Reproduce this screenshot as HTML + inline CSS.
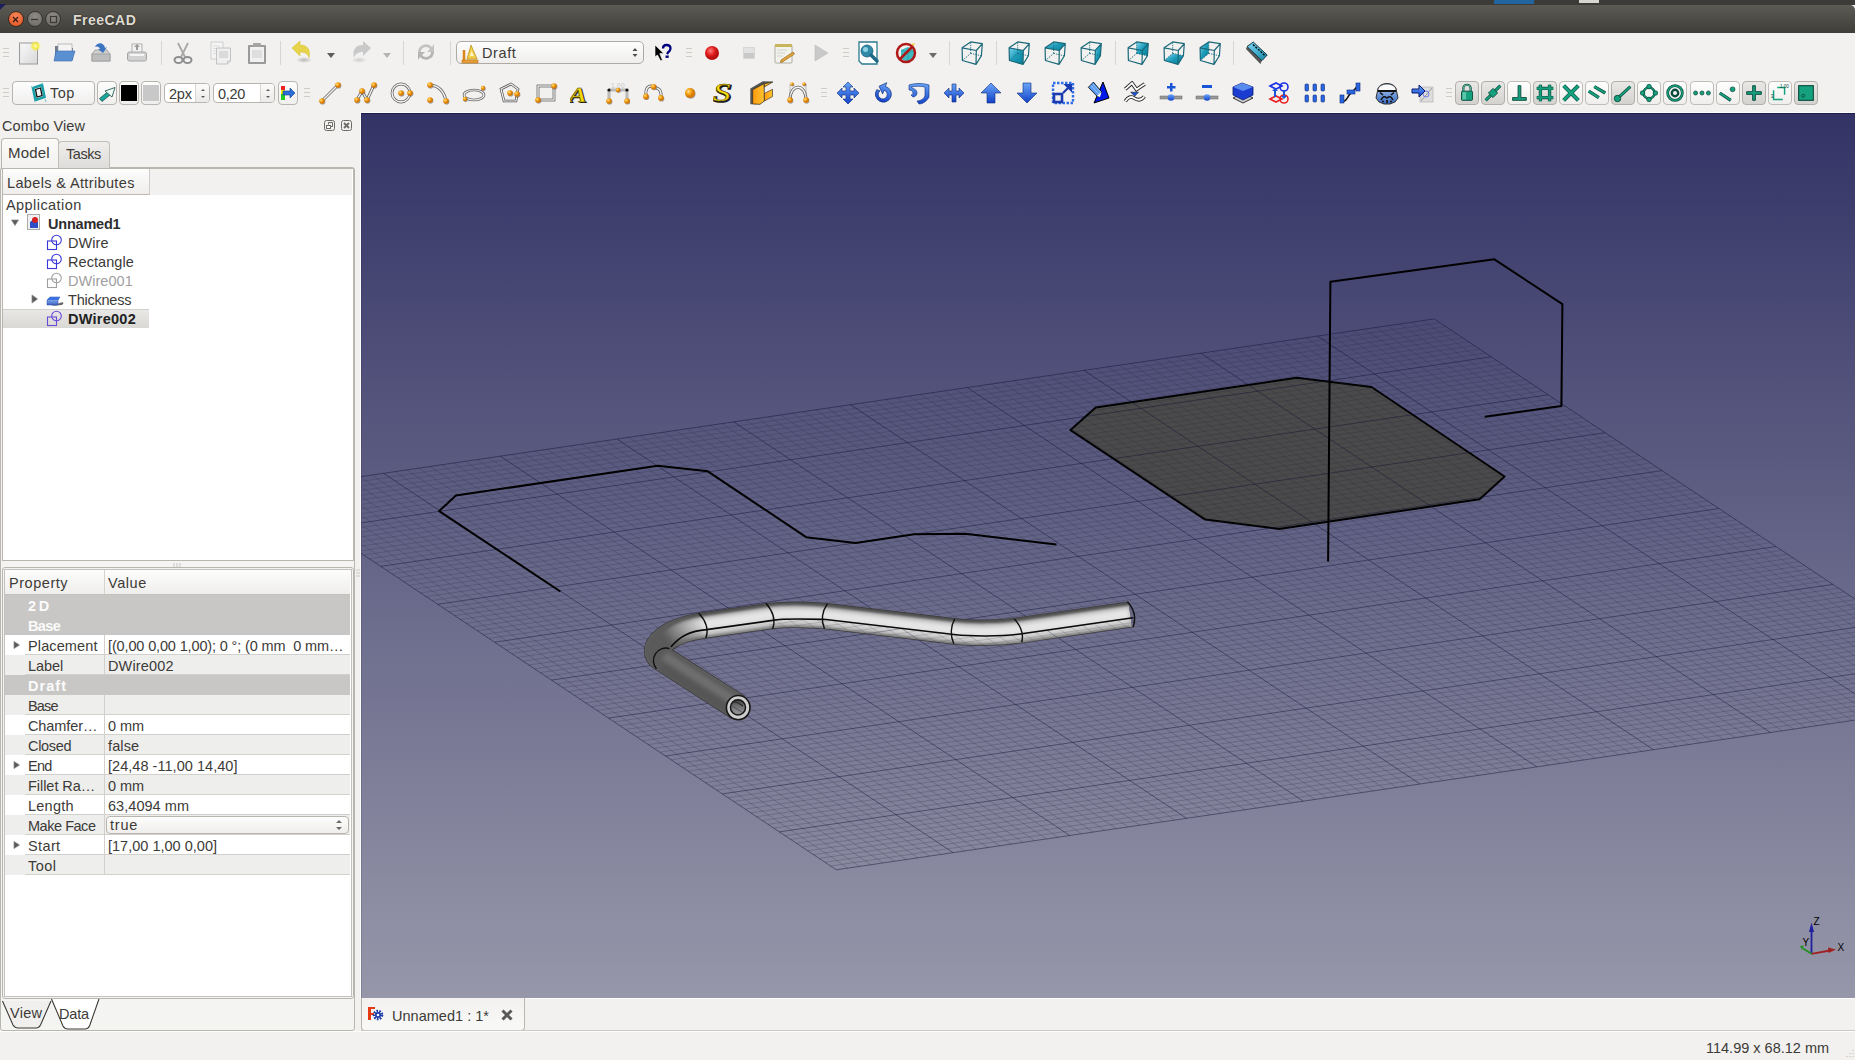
<!DOCTYPE html><html><head><meta charset="utf-8"><style>
*{box-sizing:border-box}
body{margin:0;width:1855px;height:1060px;position:relative;overflow:hidden;background:#f2f1f0;font-family:'Liberation Sans',sans-serif;color:#3c3b37}
.a{position:absolute}
.t{position:absolute;white-space:pre;font-size:14.5px;line-height:16px;letter-spacing:0.3px}
.ic{position:absolute;width:24px;height:24px;overflow:visible}
.sep{position:absolute;width:1px;background:#d6d3ce;border-right:1px solid #fbfbfa}
.grip{position:absolute;width:6px;height:11px;background:repeating-linear-gradient(#cfccc7 0 1px,transparent 1px 4px)}
.btn{position:absolute;border:1px solid #b8b5b0;border-radius:4px;background:linear-gradient(#fdfdfd,#f0efee)}
.snap{position:absolute;width:24px;height:24px;border:1px solid #c0bdb8;border-radius:4px;background:linear-gradient(#fefefe,#efeeec)}
.snap.on{background:linear-gradient(#e9e8e6,#d4d2cf);border-color:#b3b0ab}
</style></head><body>

<div class="a" style="left:0;top:0;width:1855px;height:5px;background:#3c3b37"></div>
<div class="a" style="left:1494px;top:0;width:40px;height:4px;background:#1a6fb8;opacity:.8"></div>
<div class="a" style="left:1579px;top:0;width:20px;height:3px;background:#d8d6d0"></div>
<div class="a" style="left:0;top:5px;width:1855px;height:28px;border-radius:5px 5px 0 0;background:linear-gradient(#5c5a53,#3f3e3a)"></div>
<div class="a" style="left:0;top:4px;width:6px;height:6px;background:#1b1f5a;clip-path:polygon(0 0,100% 0,0 100%)"></div>
<div class="a" style="left:7.5px;top:11px;width:16px;height:16px;border-radius:50%;background:radial-gradient(circle at 50% 30%,#f5865a,#e0501e);border:1px solid #3a2a20"></div>
<svg class="a" style="left:8px;top:12px" width="15" height="15"><path d="M5 5L10 10M10 5L5 10" stroke="#3b1a10" stroke-width="1.3"/></svg>
<div class="a" style="left:26.5px;top:11px;width:16px;height:16px;border-radius:50%;background:radial-gradient(circle at 50% 30%,#8e8b84,#6a6862);border:1px solid #35342f"></div>
<div class="a" style="left:45.4px;top:11px;width:16px;height:16px;border-radius:50%;background:radial-gradient(circle at 50% 30%,#8e8b84,#6a6862);border:1px solid #35342f"></div>
<svg class="a" style="left:27px;top:12px" width="15" height="15"><path d="M4 7.5H11" stroke="#3a3935" stroke-width="1.3"/></svg>
<svg class="a" style="left:46px;top:12px" width="15" height="15"><rect x="4.5" y="4.5" width="6" height="6" fill="none" stroke="#3a3935" stroke-width="1.2"/></svg>
<div class="t" style="left:73px;top:12px;font-size:14px;font-weight:bold;letter-spacing:0.48px;color:#dfdbd2;text-shadow:0 0 1.5px #222">FreeCAD</div>
<svg class="a" style="left:3px;top:47px" width="6" height="12"><path d="M0 1.5H6M0 5.5H6M0 9.5H6" stroke="#cfcbc5" stroke-width="1"/></svg>
<svg class="a" style="left:17.0px;top:41.0px" width="24" height="24" viewBox="0 0 24 24"><defs><linearGradient id="pg" x1="0" y1="0" x2="1" y2="1"><stop offset="0" stop-color="#fafafa"/><stop offset="1" stop-color="#d8d8d8"/></linearGradient><radialGradient id="yd"><stop offset="0" stop-color="#fffde0"/><stop offset=".45" stop-color="#f6ea40"/><stop offset="1" stop-color="#f6ea40" stop-opacity="0"/></radialGradient></defs><rect x="2.5" y="2" width="18" height="21" fill="url(#pg)" stroke="#9a9a9a"/><path d="M4 3.5v18" stroke="#e8e8e8"/><circle cx="18.5" cy="5" r="5.5" fill="url(#yd)"/></svg>
<svg class="a" style="left:52.5px;top:41.0px" width="24" height="24" viewBox="0 0 24 24"><path d="M2 5h6l2 2h10v12H2z" fill="#6f7d8c"/><rect x="5" y="3" width="14" height="10" fill="#f4f4f4" stroke="#9a9a9a" stroke-width=".6"/><path d="M3 10h19l-3 10H1z" fill="#5a8fd1" stroke="#3b6bb0" stroke-width=".6"/></svg>
<svg class="a" style="left:88.5px;top:41.0px" width="24" height="24" viewBox="0 0 24 24"><path d="M3 13l3-4h12l3 4v7H3z" fill="#cfcfcf" stroke="#9b9b9b" stroke-width=".8"/><rect x="3" y="13" width="18" height="7" fill="#bdbdbd" stroke="#9b9b9b" stroke-width=".8"/><path d="M6 6c2-5 9-5 10 1l2-1-4 6-5-4 2 0c-1-3-4-3-5-2z" fill="#3d74c0"/></svg>
<svg class="a" style="left:125.0px;top:41.0px" width="24" height="24" viewBox="0 0 24 24"><rect x="7" y="3" width="10" height="9" fill="#f2f2f2" stroke="#a0a0a0" stroke-width=".8"/><path d="M11 9V6h-2l3-3 3 3h-2v3z" fill="#9a9a9a"/><rect x="2.5" y="11" width="19" height="9" rx="2" fill="#d2d2d2" stroke="#a5a5a5"/><rect x="5" y="13" width="14" height="2" fill="#f5f5f5"/></svg>
<div class="a" style="left:160.5px;top:41px;width:1px;height:24px;background:#d9d6d1"></div>
<svg class="a" style="left:171.0px;top:41.0px" width="24" height="24" viewBox="0 0 24 24"><path d="M7 2l7 14M17 2L10 16" stroke="#a8a8a8" stroke-width="1.8" fill="none"/><ellipse cx="7.5" cy="19" rx="4" ry="3" fill="none" stroke="#8e8e8e" stroke-width="2"/><ellipse cx="16.5" cy="19" rx="4" ry="3" fill="none" stroke="#8e8e8e" stroke-width="2"/></svg>
<svg class="a" style="left:209.0px;top:41.0px" width="24" height="24" viewBox="0 0 24 24"><rect x="2" y="1" width="12" height="17" fill="#f4f4f4" stroke="#c8c8c8" stroke-width=".8"/><path d="M4 5h7M4 7.5h7M4 10h6M4 12.5h7" stroke="#d8d8d8" stroke-width=".8"/><path d="M7.5 7h14v13l-3 3h-11z" fill="#efefef" stroke="#b8b8b8" stroke-width=".8"/><rect x="10" y="10" width="9" height="7" fill="#dadada"/><path d="M18.5 23v-3h3" fill="#ddd" stroke="#b8b8b8" stroke-width=".6"/></svg>
<svg class="a" style="left:244.5px;top:41.0px" width="24" height="24" viewBox="0 0 24 24"><rect x="3" y="4" width="18" height="19" fill="#9a9a9a" rx="1"/><rect x="5" y="6" width="14" height="15" fill="#f1f1f1"/><rect x="8" y="2" width="8" height="4" fill="#a5a5a5" rx="1"/><rect x="7" y="9" width="10" height="8" fill="#dedede"/></svg>
<div class="a" style="left:279.5px;top:41px;width:1px;height:24px;background:#d9d6d1"></div>
<svg class="a" style="left:290.5px;top:40.0px" width="24" height="24" viewBox="0 0 24 24"><defs><radialGradient id="sh"><stop offset="0" stop-color="#000" stop-opacity=".25"/><stop offset="1" stop-color="#000" stop-opacity="0"/></radialGradient></defs><ellipse cx="13" cy="20" rx="8" ry="3" fill="url(#sh)"/><path d="M1 8l8-7v4c7 0 11 4 9 13-1-4-4-6-9-6v4z" fill="#e7d44a" stroke="#d2bd2a" stroke-width=".5"/></svg>
<svg class="a" style="left:319.0px;top:43.0px" width="24" height="24" viewBox="0 0 24 24"><path d="M8 10h8l-4 5z" fill="#5d5d5d"/></svg>
<svg class="a" style="left:347.5px;top:40.0px" width="24" height="24" viewBox="0 0 24 24"><ellipse cx="11" cy="20" rx="8" ry="3" fill="url(#sh)" opacity=".6"/><path d="M23 8l-8-7v4C8 5 4 9 6 18c1-4 4-6 9-6v4z" fill="#c9c9c9"/></svg>
<svg class="a" style="left:375.0px;top:43.0px" width="24" height="24" viewBox="0 0 24 24"><path d="M8 10h8l-4 5z" fill="#b4b4b4"/></svg>
<div class="a" style="left:402.5px;top:41px;width:1px;height:24px;background:#d9d6d1"></div>
<svg class="a" style="left:414.0px;top:40.0px" width="24" height="24" viewBox="0 0 24 24"><path d="M4 12a8 8 0 0 1 14-5l2-3v8h-7l3-3a5 5 0 0 0-9 3z" fill="#c3c3c3"/><path d="M20 12a8 8 0 0 1-14 5l-2 3v-8h7l-3 3a5 5 0 0 0 9-3z" fill="#b5b5b5"/></svg>
<div class="a" style="left:449.5px;top:41px;width:1px;height:24px;background:#d9d6d1"></div>
<div class="btn" style="left:456px;top:41px;width:188px;height:23px;border-color:#aeaba6;border-radius:5px;background:linear-gradient(#fdfdfd,#efeeec)"></div>
<svg class="a" style="left:459.0px;top:41.5px" width="22" height="22" viewBox="0 0 22 22"><path d="M3 18h16v3H3z" fill="#e8a23a" stroke="#b86e10" stroke-width=".6"/><path d="M5 19V8" stroke="#d8851d" stroke-width="2.5"/><path d="M8 17L12 3l6 14z" fill="#f2cf4a" stroke="#b88a10" stroke-width=".7"/><path d="M11 14l1.5-5 2.5 5z" fill="#fff6c8"/></svg>
<div class="t" style="left:482px;top:45px;letter-spacing:0.62px;">Draft</div>
<svg class="a" style="left:628.0px;top:42.5px" width="12" height="20" viewBox="0 0 12 20"><path d="M4.5 8l2.5-3 2.5 3zM4.5 11l2.5 3 2.5-3z" fill="#4d4d4d"/></svg>
<svg class="a" style="left:651.0px;top:41.0px" width="24" height="24" viewBox="0 0 24 24"><path d="M4 4L12.8 12.6H8.8L11.6 19.6H9.4L6.5 14L4 15.7z" fill="#000" stroke="#fff" stroke-width=".6"/><path d="M12 7.5Q12 4 15.5 4Q19.5 4 19.5 7.5Q19.5 9.5 17 11.5L16 13" fill="none" stroke="#000080" stroke-width="2.3"/><rect x="14.5" y="14.5" width="3.2" height="2.4" fill="#000080"/></svg>
<svg class="a" style="left:686px;top:47px" width="6" height="12"><path d="M0 1.5H6M0 5.5H6M0 9.5H6" stroke="#cfcbc5" stroke-width="1"/></svg>
<svg class="a" style="left:700.0px;top:41.0px" width="24" height="24" viewBox="0 0 24 24"><defs><radialGradient id="rd" cx=".4" cy=".35"><stop offset="0" stop-color="#ff8080"/><stop offset=".6" stop-color="#e42020"/><stop offset="1" stop-color="#b81010"/></radialGradient></defs><circle cx="12" cy="12" r="7" fill="url(#rd)"/></svg>
<svg class="a" style="left:736.5px;top:41.0px" width="24" height="24" viewBox="0 0 24 24"><rect x="6.5" y="6.5" width="11" height="11" fill="#c9c9c9" stroke="#d7d7d7"/><rect x="7" y="7" width="10" height="5" fill="#e2e2e2"/></svg>
<svg class="a" style="left:772.0px;top:41.0px" width="24" height="24" viewBox="0 0 24 24"><rect x="3" y="4" width="17" height="18" rx="1" fill="#f3f3ee" stroke="#9d9d93" stroke-width=".8"/><rect x="3" y="3" width="17" height="3" fill="#c8b45a"/><path d="M5 9h10M5 12h8M5 15h6" stroke="#c4c4c4" stroke-width=".8"/><path d="M9 19l12-8 1.5 2-12 8-2 .5z" fill="#e2a63a" stroke="#8a5a10" stroke-width=".6"/></svg>
<svg class="a" style="left:808.5px;top:41.0px" width="24" height="24" viewBox="0 0 24 24"><path d="M6 4l13 8-13 8z" fill="#c9c9c9" stroke="#bdbdbd" stroke-width=".6"/></svg>
<svg class="a" style="left:842.5px;top:47px" width="6" height="12"><path d="M0 1.5H6M0 5.5H6M0 9.5H6" stroke="#cfcbc5" stroke-width="1"/></svg>
<svg class="a" style="left:856.5px;top:41.0px" width="24" height="24" viewBox="0 0 24 24"><path d="M2 1h18v22H5l-3-3z" fill="#fff" stroke="#2c7a8e" stroke-width="1.3"/><circle cx="10" cy="10" r="6" fill="#2e8aa8" stroke="#1c5e78" stroke-width=".8"/><circle cx="8.5" cy="8.5" r="2.5" fill="#8fd0e4"/><path d="M14 14l6 6" stroke="#1e6a86" stroke-width="3.5" stroke-linecap="round"/></svg>
<svg class="a" style="left:893.5px;top:41.0px" width="24" height="24" viewBox="0 0 24 24"><path d="M7 9l7-3 6 3v9l-6 3-7-3z" fill="#3fb9c2"/><path d="M7 9l7 3 6-3M14 12v9" stroke="#2a8f99" stroke-width=".6" fill="none"/><circle cx="12" cy="12" r="9" fill="none" stroke="#b01818" stroke-width="2.5"/><path d="M5.5 18.5L18.5 5.5" stroke="#b01818" stroke-width="2.5"/><path d="M17 3l4-1-1 3z" fill="#f0d040"/></svg>
<svg class="a" style="left:921.0px;top:43.0px" width="24" height="24" viewBox="0 0 24 24"><path d="M8 10h8l-4 5z" fill="#6b6b6b"/></svg>
<div class="a" style="left:948.5px;top:41px;width:1px;height:24px;background:#d9d6d1"></div>
<svg class="a" style="left:959.5px;top:41.0px" width="24" height="24" viewBox="0 0 24 24"><defs><linearGradient id="cg" x1="0" y1="0" x2="1" y2="1"><stop offset="0" stop-color="#7fd8f4"/><stop offset=".5" stop-color="#1a9ab8"/><stop offset="1" stop-color="#0a7f98"/></linearGradient></defs><path d="M10.7 12.4L10.7 0.9M10.7 12.4L21.4 14.8M10.7 12.4L2.4 19.5" fill="none" stroke="#1d6f80" stroke-width=".9" stroke-dasharray="1.4 1"/><path d="M2.1 6.8L16.3 9.5L16 23.4L2.4 19.5ZM2.1 6.8L10.7 0.9L22.3 2.6L16.3 9.5ZM16.3 9.5L22.3 2.6L21.4 14.8L16 23.4Z" fill="none" stroke="#1a6878" stroke-width="1.2" stroke-linejoin="round"/></svg>
<div class="a" style="left:996px;top:41px;width:1px;height:24px;background:#d9d6d1"></div>
<svg class="a" style="left:1006.5px;top:41.0px" width="24" height="24" viewBox="0 0 24 24"><defs><linearGradient id="cg" x1="0" y1="0" x2="1" y2="1"><stop offset="0" stop-color="#7fd8f4"/><stop offset=".5" stop-color="#1a9ab8"/><stop offset="1" stop-color="#0a7f98"/></linearGradient></defs><path d="M2.1 6.8L16.3 9.5L16 23.4L2.4 19.5Z" fill="url(#cg)"/><path d="M10.7 12.4L10.7 0.9M10.7 12.4L21.4 14.8M10.7 12.4L2.4 19.5" fill="none" stroke="#1d6f80" stroke-width=".9" stroke-dasharray="1.4 1"/><path d="M2.1 6.8L16.3 9.5L16 23.4L2.4 19.5ZM2.1 6.8L10.7 0.9L22.3 2.6L16.3 9.5ZM16.3 9.5L22.3 2.6L21.4 14.8L16 23.4Z" fill="none" stroke="#1a6878" stroke-width="1.2" stroke-linejoin="round"/></svg>
<svg class="a" style="left:1042.5px;top:41.0px" width="24" height="24" viewBox="0 0 24 24"><defs><linearGradient id="cg" x1="0" y1="0" x2="1" y2="1"><stop offset="0" stop-color="#7fd8f4"/><stop offset=".5" stop-color="#1a9ab8"/><stop offset="1" stop-color="#0a7f98"/></linearGradient></defs><path d="M2.1 6.8L10.7 0.9L22.3 2.6L16.3 9.5Z" fill="url(#cg)"/><path d="M10.7 12.4L10.7 0.9M10.7 12.4L21.4 14.8M10.7 12.4L2.4 19.5" fill="none" stroke="#1d6f80" stroke-width=".9" stroke-dasharray="1.4 1"/><path d="M2.1 6.8L16.3 9.5L16 23.4L2.4 19.5ZM2.1 6.8L10.7 0.9L22.3 2.6L16.3 9.5ZM16.3 9.5L22.3 2.6L21.4 14.8L16 23.4Z" fill="none" stroke="#1a6878" stroke-width="1.2" stroke-linejoin="round"/></svg>
<svg class="a" style="left:1078.5px;top:41.0px" width="24" height="24" viewBox="0 0 24 24"><defs><linearGradient id="cg" x1="0" y1="0" x2="1" y2="1"><stop offset="0" stop-color="#7fd8f4"/><stop offset=".5" stop-color="#1a9ab8"/><stop offset="1" stop-color="#0a7f98"/></linearGradient></defs><path d="M16.3 9.5L22.3 2.6L21.4 14.8L16 23.4Z" fill="url(#cg)"/><path d="M10.7 12.4L10.7 0.9M10.7 12.4L21.4 14.8M10.7 12.4L2.4 19.5" fill="none" stroke="#1d6f80" stroke-width=".9" stroke-dasharray="1.4 1"/><path d="M2.1 6.8L16.3 9.5L16 23.4L2.4 19.5ZM2.1 6.8L10.7 0.9L22.3 2.6L16.3 9.5ZM16.3 9.5L22.3 2.6L21.4 14.8L16 23.4Z" fill="none" stroke="#1a6878" stroke-width="1.2" stroke-linejoin="round"/></svg>
<div class="a" style="left:1115px;top:41px;width:1px;height:24px;background:#d9d6d1"></div>
<svg class="a" style="left:1125.5px;top:41.0px" width="24" height="24" viewBox="0 0 24 24"><defs><linearGradient id="cg" x1="0" y1="0" x2="1" y2="1"><stop offset="0" stop-color="#7fd8f4"/><stop offset=".5" stop-color="#1a9ab8"/><stop offset="1" stop-color="#0a7f98"/></linearGradient></defs><path d="M10.7 0.9L22.3 2.6L21.4 14.8L10.7 12.4Z" fill="url(#cg)"/><path d="M10.7 12.4L10.7 0.9M10.7 12.4L21.4 14.8M10.7 12.4L2.4 19.5" fill="none" stroke="#1d6f80" stroke-width=".9" stroke-dasharray="1.4 1"/><path d="M2.1 6.8L16.3 9.5L16 23.4L2.4 19.5ZM2.1 6.8L10.7 0.9L22.3 2.6L16.3 9.5ZM16.3 9.5L22.3 2.6L21.4 14.8L16 23.4Z" fill="none" stroke="#1a6878" stroke-width="1.2" stroke-linejoin="round"/></svg>
<svg class="a" style="left:1161.5px;top:41.0px" width="24" height="24" viewBox="0 0 24 24"><defs><linearGradient id="cg" x1="0" y1="0" x2="1" y2="1"><stop offset="0" stop-color="#7fd8f4"/><stop offset=".5" stop-color="#1a9ab8"/><stop offset="1" stop-color="#0a7f98"/></linearGradient></defs><path d="M2.4 19.5L16 23.4L21.4 14.8L10.7 12.4Z" fill="url(#cg)"/><path d="M10.7 12.4L10.7 0.9M10.7 12.4L21.4 14.8M10.7 12.4L2.4 19.5" fill="none" stroke="#1d6f80" stroke-width=".9" stroke-dasharray="1.4 1"/><path d="M2.1 6.8L16.3 9.5L16 23.4L2.4 19.5ZM2.1 6.8L10.7 0.9L22.3 2.6L16.3 9.5ZM16.3 9.5L22.3 2.6L21.4 14.8L16 23.4Z" fill="none" stroke="#1a6878" stroke-width="1.2" stroke-linejoin="round"/></svg>
<svg class="a" style="left:1197.5px;top:41.0px" width="24" height="24" viewBox="0 0 24 24"><defs><linearGradient id="cg" x1="0" y1="0" x2="1" y2="1"><stop offset="0" stop-color="#7fd8f4"/><stop offset=".5" stop-color="#1a9ab8"/><stop offset="1" stop-color="#0a7f98"/></linearGradient></defs><path d="M2.1 6.8L10.7 0.9L10.7 12.4L2.4 19.5Z" fill="url(#cg)"/><path d="M10.7 12.4L10.7 0.9M10.7 12.4L21.4 14.8M10.7 12.4L2.4 19.5" fill="none" stroke="#1d6f80" stroke-width=".9" stroke-dasharray="1.4 1"/><path d="M2.1 6.8L16.3 9.5L16 23.4L2.4 19.5ZM2.1 6.8L10.7 0.9L22.3 2.6L16.3 9.5ZM16.3 9.5L22.3 2.6L21.4 14.8L16 23.4Z" fill="none" stroke="#1a6878" stroke-width="1.2" stroke-linejoin="round"/></svg>
<div class="a" style="left:1233px;top:41px;width:1px;height:24px;background:#d9d6d1"></div>
<svg class="a" style="left:1245.0px;top:41.0px" width="24" height="24" viewBox="0 0 24 24"><defs><linearGradient id="rl" x1="0" y1="0" x2="1" y2="1"><stop offset="0" stop-color="#7fd6f4"/><stop offset="1" stop-color="#1388a8"/></linearGradient></defs><path d="M1 8L2 5.5L17 19.6L15.4 23z" fill="#555"/><path d="M2 5.5L8.3 1L22.2 14L17 19.6z" fill="url(#rl)" stroke="#0a2a30" stroke-width=".9"/><path d="M8 3.5l1.5 1.5M10.5 5.8l1.5 1.5M13 8.1l1.5 1.5M15.5 10.4l1.5 1.5M18 12.7l1.5 1.5" stroke="#000" stroke-width="1.3"/></svg>
<svg class="a" style="left:3px;top:87px" width="6" height="12"><path d="M0 1.5H6M0 5.5H6M0 9.5H6" stroke="#cfcbc5" stroke-width="1"/></svg>
<div class="btn" style="left:12px;top:81px;width:83px;height:24px"></div>
<svg class="a" style="left:29.0px;top:81.0px" width="18" height="24" viewBox="0 0 18 24"><path d="M4 7L13 4L15.5 16L6.5 19z" fill="none" stroke="#1aa0a8" stroke-width="2.6"/><path d="M6.5 8.5L11.5 7L13 14.5L8 16z" fill="none" stroke="#111" stroke-width="1.3"/><path d="M2 5l2 2M13 2v2M16 18l1 3M5 20l1.5-1" stroke="#5ab8c0" stroke-width=".8"/></svg>
<div class="t" style="left:50px;top:85px;letter-spacing:0.45px;">Top</div>
<div class="btn" style="left:97px;top:81px;width:20px;height:24px"></div>
<svg class="a" style="left:98.0px;top:83.0px" width="18" height="20" viewBox="0 0 18 20"><path d="M1.5 15.5l8-6.5 2.5 3-8 6.5z" fill="#1aa59a" stroke="#0a4a44" stroke-width=".7"/><path d="M7 8L17 4.5L14 14z" fill="#eefaf6" stroke="#2a5a54" stroke-width=".9"/></svg>
<div class="btn" style="left:119px;top:81px;width:20px;height:24px"></div>
<div class="a" style="left:121px;top:85px;width:16px;height:16px;background:#000"></div>
<div class="btn" style="left:141px;top:81px;width:20px;height:24px"></div>
<div class="a" style="left:143px;top:85px;width:16px;height:16px;background:#c8c8c8"></div>
<div class="a" style="left:164px;top:83px;width:46px;height:20px;border:1px solid #b8b5b0;border-radius:4px;background:#fff"></div>
<div class="a" style="left:195px;top:84px;width:14px;height:18px;border-left:1px solid #d8d6d2;border-radius:0 3px 3px 0;background:linear-gradient(#fbfbfa,#eceae8)"></div>
<svg class="a" style="left:198px;top:85px" width="10" height="16"><path d="M3 6l2-2 2 2zM3 11l2 2 2-2z" fill="#5a5a5a"/></svg>
<div class="t" style="left:169px;top:86px;letter-spacing:-0.20px;">2px</div>
<div class="a" style="left:213px;top:83px;width:62px;height:20px;border:1px solid #b8b5b0;border-radius:4px;background:#fff"></div>
<div class="a" style="left:260px;top:84px;width:14px;height:18px;border-left:1px solid #d8d6d2;border-radius:0 3px 3px 0;background:linear-gradient(#fbfbfa,#eceae8)"></div>
<svg class="a" style="left:263px;top:85px" width="10" height="16"><path d="M3 6l2-2 2 2zM3 11l2 2 2-2z" fill="#5a5a5a"/></svg>
<div class="t" style="left:218px;top:86px;letter-spacing:-0.30px;">0,20</div>
<div class="btn" style="left:278px;top:81px;width:20px;height:24px"></div>
<svg class="a" style="left:278.0px;top:83.0px" width="20" height="20" viewBox="0 0 20 20"><rect x="3" y="3" width="4" height="14" fill="#e22"/><rect x="3" y="7" width="4" height="4" fill="#ee0"/><rect x="3" y="11" width="4" height="6" fill="#2c2"/><path d="M5 8h7V5l5 5-5 5v-3H5z" fill="#2a6fd8" stroke="#0e3c8a" stroke-width=".6"/></svg>
<svg class="a" style="left:304px;top:87px" width="6" height="12"><path d="M0 1.5H6M0 5.5H6M0 9.5H6" stroke="#cfcbc5" stroke-width="1"/></svg>
<svg width="0" height="0" class="a"><defs><radialGradient id="ob" cx=".35" cy=".35"><stop offset="0" stop-color="#ffe39a"/><stop offset=".5" stop-color="#f8a81c"/><stop offset="1" stop-color="#d77a00"/></radialGradient></defs></svg>
<svg class="a" style="left:318.0px;top:81.0px" width="24" height="24" viewBox="0 0 24 24"><path d="M4 20L20 4" fill="none" stroke="#666" stroke-width="3"/><path d="M4 20L20 4" fill="none" stroke="#f5f5f5" stroke-width="1.4"/><circle cx="4.6" cy="20.8" r="2.8" fill="#555" opacity=".55"/><circle cx="4" cy="20" r="2.8" fill="url(#ob)"/><circle cx="20.6" cy="4.8" r="2.8" fill="#555" opacity=".55"/><circle cx="20" cy="4" r="2.8" fill="url(#ob)"/></svg>
<svg class="a" style="left:354.0px;top:81.0px" width="24" height="24" viewBox="0 0 24 24"><path d="M3 19L8 10l5 9 7-15" fill="none" stroke="#666" stroke-width="3"/><path d="M3 19L8 10l5 9 7-15" fill="none" stroke="#f5f5f5" stroke-width="1.4"/><circle cx="3.6" cy="19.8" r="2.8" fill="#555" opacity=".55"/><circle cx="3" cy="19" r="2.8" fill="url(#ob)"/><circle cx="8.6" cy="10.8" r="2.8" fill="#555" opacity=".55"/><circle cx="8" cy="10" r="2.8" fill="url(#ob)"/><circle cx="13.6" cy="19.8" r="2.8" fill="#555" opacity=".55"/><circle cx="13" cy="19" r="2.8" fill="url(#ob)"/><circle cx="20.6" cy="4.8" r="2.8" fill="#555" opacity=".55"/><circle cx="20" cy="4" r="2.8" fill="url(#ob)"/></svg>
<svg class="a" style="left:389.5px;top:81.0px" width="24" height="24" viewBox="0 0 24 24"><circle cx="11" cy="12" r="9" fill="none" stroke="#666" stroke-width="2.8"/><circle cx="11" cy="12" r="9" fill="none" stroke="#f5f5f5" stroke-width="1.3"/><circle cx="11.6" cy="12.8" r="2.8" fill="#555" opacity=".55"/><circle cx="11" cy="12" r="2.8" fill="url(#ob)"/><circle cx="20.6" cy="12.8" r="2.8" fill="#555" opacity=".55"/><circle cx="20" cy="12" r="2.8" fill="url(#ob)"/></svg>
<svg class="a" style="left:425.5px;top:81.0px" width="24" height="24" viewBox="0 0 24 24"><path d="M4 4Q17 5 20 20" fill="none" stroke="#666" stroke-width="3"/><path d="M4 4Q17 5 20 20" fill="none" stroke="#f5f5f5" stroke-width="1.4"/><circle cx="4.6" cy="4.8" r="2.8" fill="#555" opacity=".55"/><circle cx="4" cy="4" r="2.8" fill="url(#ob)"/><circle cx="4.6" cy="19.8" r="2.8" fill="#555" opacity=".55"/><circle cx="4" cy="19" r="2.8" fill="url(#ob)"/><circle cx="20.6" cy="20.8" r="2.8" fill="#555" opacity=".55"/><circle cx="20" cy="20" r="2.8" fill="url(#ob)"/></svg>
<svg class="a" style="left:461.5px;top:81.0px" width="24" height="24" viewBox="0 0 24 24"><ellipse cx="12" cy="14" rx="10" ry="5" fill="none" stroke="#666" stroke-width="2.6"/><ellipse cx="12" cy="14" rx="10" ry="5" fill="none" stroke="#f5f5f5" stroke-width="1.2"/><circle cx="3.6" cy="18.8" r="2.2" fill="#555" opacity=".55"/><circle cx="3" cy="18" r="2.2" fill="url(#ob)"/><circle cx="21.6" cy="7.8" r="2.2" fill="#555" opacity=".55"/><circle cx="21" cy="7" r="2.2" fill="url(#ob)"/></svg>
<svg class="a" style="left:497.5px;top:81.0px" width="24" height="24" viewBox="0 0 24 24"><path d="M3 8l10-5 7 5-2 12H6z" fill="none" stroke="#555" stroke-width="2.6"/><path d="M3 8l10-5 7 5-2 12H6z" fill="none" stroke="#f5f5f5" stroke-width="1.1"/><circle cx="12.6" cy="12.8" r="2.8" fill="#555" opacity=".55"/><circle cx="12" cy="12" r="2.8" fill="url(#ob)"/><circle cx="19.6" cy="13.8" r="2.8" fill="#555" opacity=".55"/><circle cx="19" cy="13" r="2.8" fill="url(#ob)"/></svg>
<svg class="a" style="left:534.0px;top:81.0px" width="24" height="24" viewBox="0 0 24 24"><rect x="4" y="5" width="16" height="14" fill="none" stroke="#666" stroke-width="2.8"/><rect x="4" y="5" width="16" height="14" fill="none" stroke="#f5f5f5" stroke-width="1.2"/><circle cx="4.6" cy="19.8" r="2.8" fill="#555" opacity=".55"/><circle cx="4" cy="19" r="2.8" fill="url(#ob)"/><circle cx="20.6" cy="5.8" r="2.8" fill="#555" opacity=".55"/><circle cx="20" cy="5" r="2.8" fill="url(#ob)"/></svg>
<svg class="a" style="left:570.0px;top:81.0px" width="24" height="24" viewBox="0 0 24 24"><g transform="scale(1.25,1)"><text x="-1" y="21" font-family="Liberation Serif" font-weight="bold" font-style="italic" font-size="22" fill="#222" transform="translate(.8,.8)">A</text><text x="-1" y="21" font-family="Liberation Serif" font-weight="bold" font-style="italic" font-size="22" fill="#f4d80c" stroke="#3a3000" stroke-width=".5">A</text></g></svg>
<svg class="a" style="left:606.0px;top:81.0px" width="24" height="24" viewBox="0 0 24 24"><text x="5" y="7" font-family="Liberation Sans" font-size="7" fill="#c8c8c8">1,00</text><path d="M3 9h18M3 9v11M21 9v11" stroke="#777" stroke-width="2.5" fill="none"/><path d="M3 9h18M3 9v11M21 9v11" stroke="#fff" stroke-width="1" fill="none"/><circle cx="3" cy="9" r="1.6" fill="#111"/><circle cx="21" cy="9" r="1.6" fill="#111"/><circle cx="12.6" cy="9.8" r="2.2" fill="#555" opacity=".55"/><circle cx="12" cy="9" r="2.2" fill="url(#ob)"/><circle cx="3.6" cy="20.8" r="2.8" fill="#555" opacity=".55"/><circle cx="3" cy="20" r="2.8" fill="url(#ob)"/><circle cx="21.6" cy="20.8" r="2.8" fill="#555" opacity=".55"/><circle cx="21" cy="20" r="2.8" fill="url(#ob)"/></svg>
<svg class="a" style="left:642.0px;top:81.0px" width="24" height="24" viewBox="0 0 24 24"><path d="M4 15.4C3 6 7 4 11.6 5.7S20 8 18.9 16.9" fill="none" stroke="#666" stroke-width="3"/><path d="M4 15.4C3 6 7 4 11.6 5.7S20 8 18.9 16.9" fill="none" stroke="#f5f5f5" stroke-width="1.4"/><circle cx="4.5" cy="16.2" r="2.8" fill="#555" opacity=".55"/><circle cx="3.9" cy="15.4" r="2.8" fill="url(#ob)"/><circle cx="19.5" cy="17.7" r="2.8" fill="#555" opacity=".55"/><circle cx="18.9" cy="16.9" r="2.8" fill="url(#ob)"/><circle cx="12.2" cy="6.5" r="2.8" fill="#555" opacity=".55"/><circle cx="11.6" cy="5.7" r="2.8" fill="url(#ob)"/></svg>
<svg class="a" style="left:677.5px;top:81.0px" width="24" height="24" viewBox="0 0 24 24"><circle cx="12.6" cy="12.8" r="5" fill="#555" opacity=".55"/><circle cx="12" cy="12" r="5" fill="url(#ob)"/></svg>
<svg class="a" style="left:713.0px;top:81.0px" width="24" height="24" viewBox="0 0 24 24"><g transform="scale(1.4,1)"><text x="0" y="20" font-family="Liberation Serif" font-style="italic" font-size="25" fill="#1a1a1a" stroke="#1a1a1a" stroke-width="1.6" transform="translate(0.6,0.8)">S</text><text x="0" y="20" font-family="Liberation Serif" font-style="italic" font-size="25" fill="#f4dc10" stroke="#5a4a00" stroke-width=".4">S</text></g></svg>
<svg class="a" style="left:750.0px;top:81.0px" width="24" height="24" viewBox="0 0 24 24"><defs><linearGradient id="fb" x1="0" y1="0" x2="1" y2="0"><stop offset="0" stop-color="#ff9a10"/><stop offset="1" stop-color="#ffc430"/></linearGradient></defs><path d="M0.3 7.5L12.8 0.2L22.9 0.6L14.4 5.9V20L10 23.3H0.3z" fill="#555"/><path d="M2.7 8.7L14 2.7L14.4 20L10 23.3L2.7 22.9z" fill="url(#fb)" stroke="#222" stroke-width=".6"/><path d="M14.4 2.7L22.9 1L14.4 5.9z" fill="#ffb820" stroke="#222" stroke-width=".6"/><path d="M14.4 12.4L22.5 8.3V15.6L14.4 20z" fill="url(#fb)" stroke="#222" stroke-width=".6"/></svg>
<svg class="a" style="left:786.0px;top:81.0px" width="24" height="24" viewBox="0 0 24 24"><path d="M4 19C4 2 20 2 20 19" fill="none" stroke="#666" stroke-width="3"/><path d="M4 19C4 2 20 2 20 19" fill="none" stroke="#f5f5f5" stroke-width="1.4"/><path d="M4 19V3M20 19V3" stroke="#999" stroke-width=".6"/><circle cx="4.6" cy="19.8" r="2.8" fill="#555" opacity=".55"/><circle cx="4" cy="19" r="2.8" fill="url(#ob)"/><circle cx="20.6" cy="19.8" r="2.8" fill="#555" opacity=".55"/><circle cx="20" cy="19" r="2.8" fill="url(#ob)"/><circle cx="6.6" cy="3.8" r="1.8" fill="#555" opacity=".55"/><circle cx="6" cy="3" r="1.8" fill="url(#ob)"/><circle cx="18.6" cy="3.8" r="1.8" fill="#555" opacity=".55"/><circle cx="18" cy="3" r="1.8" fill="url(#ob)"/></svg>
<svg class="a" style="left:821px;top:87px" width="6" height="12"><path d="M0 1.5H6M0 5.5H6M0 9.5H6" stroke="#cfcbc5" stroke-width="1"/></svg>
<svg width="0" height="0" class="a"><defs><linearGradient id="bl" x1="0" y1="0" x2="0" y2="1"><stop offset="0" stop-color="#6aa6f8"/><stop offset="1" stop-color="#1242c8"/></linearGradient></defs></svg>
<svg class="a" style="left:835.5px;top:81.0px" width="24" height="24" viewBox="0 0 24 24"><path d="M12 1l5 5h-3v4h4V7l5 5-5 5v-3h-4v4h3l-5 5-5-5h3v-4H6v3l-5-5 5-5v3h4V6H7z" fill="url(#bl)" stroke="#0b2b7a" stroke-width=".6"/></svg>
<svg class="a" style="left:871.0px;top:81.0px" width="24" height="24" viewBox="0 0 24 24"><path d="M5 11a8 8 0 1 0 7-6V1l-6 6 6 6V9a4.5 4.5 0 1 1-3.5 2z" fill="url(#bl)" stroke="#0b2b7a" stroke-width=".6" transform="rotate(20 12 12)"/></svg>
<svg class="a" style="left:907.0px;top:81.0px" width="24" height="24" viewBox="0 0 24 24"><path d="M2 4c6-2 14-2 20 0v12c-2 4-6 7-10 7l-2-3c4 0 8-3 8-6V6c-4-1-10-1-14 0 2 2 6 2 6 6 0 3-3 4-4 4l-2-2c1 0 2-1 2-2 0-2-2-3-4-3z" fill="url(#bl)" stroke="#0b2b7a" stroke-width=".6"/></svg>
<svg class="a" style="left:943.0px;top:81.0px" width="24" height="24" viewBox="0 0 24 24"><path d="M1 12l5-5v3h3V3h4v7h3V7l5 5-5 5v-3h-3v7H9v-7H6v3z" fill="url(#bl)" stroke="#0b2b7a" stroke-width=".6"/></svg>
<svg class="a" style="left:979.0px;top:81.0px" width="24" height="24" viewBox="0 0 24 24"><path d="M12 2l10 10h-6v10H8V12H2z" fill="url(#bl)" stroke="#0b2b7a" stroke-width=".6"/></svg>
<svg class="a" style="left:1015.0px;top:81.0px" width="24" height="24" viewBox="0 0 24 24"><path d="M12 22L2 12h6V2h8v10h6z" fill="url(#bl)" stroke="#0b2b7a" stroke-width=".6"/></svg>
<svg class="a" style="left:1051.0px;top:81.0px" width="24" height="24" viewBox="0 0 24 24"><rect x="2" y="2" width="20" height="20" fill="none" stroke="#2f70e8" stroke-width="2.4" stroke-dasharray="2.5 1.5"/><rect x="3" y="13" width="8" height="8" fill="none" stroke="#1a3cb0" stroke-width="2.6"/><path d="M12 12l6-6M15 4l5 0 0 5z" stroke="#1a3cb0" stroke-width="2.2" fill="#1a3cb0"/></svg>
<svg class="a" style="left:1086.5px;top:81.0px" width="24" height="24" viewBox="0 0 24 24"><path d="M16 1L22 17L7 22z" fill="#0018e8" stroke="#000" stroke-width="1"/><path d="M1.3 6.3L6.4 1.1L14.6 10.8L12.5 15.5L9.9 15.1z" fill="#5a9af0" stroke="#000" stroke-width=".8"/><path d="M4 4.5l8 8.5M6 3l7.5 8" stroke="#a8d0ff" stroke-width=".8"/><path d="M9.9 15.1L14.6 10.8L13 16z" fill="#fff"/></svg>
<svg class="a" style="left:1122.5px;top:81.0px" width="24" height="24" viewBox="0 0 24 24"><path d="M2.3 8.2L9 2.2L13.5 8.6L21.7 3" stroke="#222" stroke-width="3.6" fill="none"/><path d="M2.3 8.2L9 2.2L13.5 8.6L21.7 3" stroke="#fff" stroke-width="1.8" fill="none"/><path d="M2.3 20.3C5 16 8 15 11 17S18 20 21.3 15.5" stroke="#222" stroke-width="3.6" fill="none"/><path d="M2.3 20.3C5 16 8 15 11 17S18 20 21.3 15.5" stroke="#fff" stroke-width="1.8" fill="none"/><path d="M7.7 11.2H15.5L11.8 15.1z" fill="#1a55e0" stroke="#000" stroke-width=".5"/></svg>
<svg class="a" style="left:1159.0px;top:81.0px" width="24" height="24" viewBox="0 0 24 24"><path d="M11 2h2.5v3h3v2.5h-3v3H11v-3H8V5h3z" fill="#1a55d8"/><rect x="1" y="15" width="22" height="3" fill="#999" stroke="#666" stroke-width=".5"/><circle cx="12" cy="16.5" r="3.3" fill="url(#bl)"/></svg>
<svg class="a" style="left:1194.5px;top:81.0px" width="24" height="24" viewBox="0 0 24 24"><rect x="7" y="4" width="10" height="3" fill="#1a55d8"/><rect x="1" y="15" width="22" height="3" fill="#999" stroke="#666" stroke-width=".5"/><circle cx="12" cy="16.5" r="3.3" fill="url(#bl)"/></svg>
<svg class="a" style="left:1230.5px;top:81.0px" width="24" height="24" viewBox="0 0 24 24"><path d="M2 17l10 5 10-5-10-5z" fill="#ccc" stroke="#333" stroke-width="1"/><path d="M2 6l9-4 11 4v8l-10 5-10-5z" fill="#1a3cd0" stroke="#061a70" stroke-width=".8"/><path d="M2 6l10 4 10-4-11-4z" fill="#5a8cf0"/></svg>
<svg class="a" style="left:1267.0px;top:81.0px" width="24" height="24" viewBox="0 0 24 24"><path d="M3 5l6-3 6 3-6 3z" fill="none" stroke="#1a2fe8" stroke-width="1.6"/><circle cx="17" cy="6" r="4" fill="none" stroke="#1a2fe8" stroke-width="1.6"/><path d="M3 18l6-3 6 3-6 3z" fill="none" stroke="#e82020" stroke-width="1.6"/><circle cx="17" cy="18" r="4" fill="none" stroke="#e82020" stroke-width="1.6"/><path d="M7 16V10H5l3-3 3 3H9v6z" fill="#1a55d8"/><path d="M16 9v6h-2l3 3 3-3h-2V9z" fill="#1a55d8"/></svg>
<svg class="a" style="left:1302.5px;top:81.0px" width="24" height="24" viewBox="0 0 24 24"><rect x="2" y="3" width="3.5" height="7" rx="1" fill="#2a66e0" stroke="#0b2b7a" stroke-width=".6"/><rect x="2" y="14" width="3.5" height="7" rx="1" fill="#2a66e0" stroke="#0b2b7a" stroke-width=".6"/><rect x="10" y="3" width="3.5" height="7" rx="1" fill="#2a66e0" stroke="#0b2b7a" stroke-width=".6"/><rect x="10" y="14" width="3.5" height="7" rx="1" fill="#2a66e0" stroke="#0b2b7a" stroke-width=".6"/><rect x="18" y="3" width="3.5" height="7" rx="1" fill="#2a66e0" stroke="#0b2b7a" stroke-width=".6"/><rect x="18" y="14" width="3.5" height="7" rx="1" fill="#2a66e0" stroke="#0b2b7a" stroke-width=".6"/></svg>
<svg class="a" style="left:1339.0px;top:81.0px" width="24" height="24" viewBox="0 0 24 24"><path d="M5 20C8 20 9 14 12 12s5-6 8-8" stroke="#111" stroke-width="1.6" fill="none"/><rect x="1" y="14" width="4" height="8" fill="#2a66e0" stroke="#0b2b7a" stroke-width=".6"/><rect x="8" y="9" width="8" height="4" fill="#2a66e0" stroke="#0b2b7a" stroke-width=".6"/><rect x="17" y="2" width="4" height="8" fill="#2a66e0" stroke="#0b2b7a" stroke-width=".6"/></svg>
<svg class="a" style="left:1375.0px;top:81.0px" width="24" height="24" viewBox="0 0 24 24"><defs><linearGradient id="st" x1="0" y1="0" x2="0" y2="1"><stop offset="0" stop-color="#b8d4f6"/><stop offset="1" stop-color="#3868c0"/></linearGradient></defs><path d="M2.5 10C2.5 0 21.5 0 21.5 10L23 17L20 21L15 23H9L4 21L1 17z" fill="url(#st)" stroke="#222" stroke-width=".9"/><path d="M3 9.5C3 1 21 1 21 9.5z" fill="#fafafa" stroke="#333" stroke-width=".6"/><path d="M3 10h18" stroke="#111" stroke-width="2"/><path d="M5 11.5l3 2.5M19 11.5l-3 2.5" stroke="#111" stroke-width="1.6"/><path d="M6 19c2-4 3.5-4 6-2 2.5-2 4-2 6 2" stroke="#111" stroke-width="1.6" fill="none"/><circle cx="8" cy="20.5" r="1" fill="#111"/><circle cx="16" cy="20.5" r="1" fill="#111"/><rect x="11" y="19" width="2" height="3" fill="#222"/></svg>
<svg class="a" style="left:1410.5px;top:81.0px" width="24" height="24" viewBox="0 0 24 24"><rect x="9" y="6" width="13" height="15" fill="#ddd" stroke="#aaa" stroke-width=".6"/><path d="M10 20L21 7" stroke="#888" stroke-width=".8"/><circle cx="15" cy="13" r="3" fill="none" stroke="#6b7de8" stroke-width="1"/><path d="M1 8h7V4l6 6-6 6v-4H1z" fill="url(#bl)" stroke="#061a70" stroke-width="1"/></svg>
<svg class="a" style="left:1445.5px;top:87px" width="6" height="12"><path d="M0 1.5H6M0 5.5H6M0 9.5H6" stroke="#cfcbc5" stroke-width="1"/></svg>
<div class="snap on" style="left:1455.0px;top:81px"></div>
<svg class="a" style="left:1456.0px;top:82px" width="22" height="22" viewBox="0 0 24 24"><path d="M8 10V7a4 4 0 0 1 8 0v3" fill="none" stroke="#0a4a3a" stroke-width="2.4"/><path d="M8 10V7a4 4 0 0 1 8 0v3" fill="none" stroke="#6fd0b4" stroke-width="1"/><rect x="6" y="10" width="12" height="10" rx="1" fill="#15a07e" stroke="#0a4a3a" stroke-width="1"/><rect x="7" y="11" width="4" height="8" fill="#8fe0c8" opacity=".6"/></svg>
<div class="snap on" style="left:1481.0px;top:81px"></div>
<svg class="a" style="left:1482.0px;top:82px" width="22" height="22" viewBox="0 0 24 24"><path d="M4 20L20 4" stroke="#0a4a3a" stroke-width="3.4"/><path d="M4 20L20 4" stroke="#15a07e" stroke-width="2"/><path d="M12 7l5 5-5 5-5-5z" fill="#15a07e" stroke="#0a4a3a" stroke-width="1"/></svg>
<div class="snap" style="left:1507.1px;top:81px"></div>
<svg class="a" style="left:1508.1px;top:82px" width="22" height="22" viewBox="0 0 24 24"><path d="M11 4h3v13h6v3H5v-3h6z" fill="#15a07e" stroke="#0a4a3a" stroke-width="1"/></svg>
<div class="snap on" style="left:1533.2px;top:81px"></div>
<svg class="a" style="left:1534.2px;top:82px" width="22" height="22" viewBox="0 0 24 24"><path d="M7 3v18M17 3v18M3 7h18M3 17h18" stroke="#0a4a3a" stroke-width="3.6"/><path d="M7 3v18M17 3v18M3 7h18M3 17h18" stroke="#15a07e" stroke-width="2.2"/></svg>
<div class="snap" style="left:1559.2px;top:81px"></div>
<svg class="a" style="left:1560.2px;top:82px" width="22" height="22" viewBox="0 0 24 24"><path d="M4 4L20 20M20 4L4 20" stroke="#0a4a3a" stroke-width="4.4"/><path d="M4 4L20 20M20 4L4 20" stroke="#15a07e" stroke-width="3"/></svg>
<div class="snap" style="left:1585.2px;top:81px"></div>
<svg class="a" style="left:1586.2px;top:82px" width="22" height="22" viewBox="0 0 24 24"><path d="M3 10L14 17M9 5l12 7" stroke="#0a4a3a" stroke-width="3.6"/><path d="M3 10L14 17M9 5l12 7" stroke="#15a07e" stroke-width="2.2"/></svg>
<div class="snap on" style="left:1611.3px;top:81px"></div>
<svg class="a" style="left:1612.3px;top:82px" width="22" height="22" viewBox="0 0 24 24"><path d="M7 17L20 5" stroke="#0a4a3a" stroke-width="3.2"/><path d="M7 17L20 5" stroke="#15a07e" stroke-width="1.8"/><circle cx="6" cy="18" r="3.5" fill="#15a07e" stroke="#0a4a3a" stroke-width="1"/></svg>
<div class="snap" style="left:1637.3px;top:81px"></div>
<svg class="a" style="left:1638.3px;top:82px" width="22" height="22" viewBox="0 0 24 24"><circle cx="12" cy="12" r="6" fill="none" stroke="#0a4a3a" stroke-width="2.6"/><circle cx="12" cy="12" r="6" fill="none" stroke="#15a07e" stroke-width="1.4"/><circle cx="12" cy="5" r="2.5" fill="#15a07e" stroke="#0a4a3a" stroke-width=".8"/><circle cx="19" cy="12" r="2.5" fill="#15a07e" stroke="#0a4a3a" stroke-width=".8"/><circle cx="12" cy="19" r="2.5" fill="#15a07e" stroke="#0a4a3a" stroke-width=".8"/><circle cx="5" cy="12" r="2.5" fill="#15a07e" stroke="#0a4a3a" stroke-width=".8"/></svg>
<div class="snap" style="left:1663.4px;top:81px"></div>
<svg class="a" style="left:1664.4px;top:82px" width="22" height="22" viewBox="0 0 24 24"><circle cx="12" cy="12" r="8" fill="none" stroke="#0a4a3a" stroke-width="3"/><circle cx="12" cy="12" r="8" fill="none" stroke="#15a07e" stroke-width="1.6"/><circle cx="12" cy="12" r="3.5" fill="none" stroke="#0a4a3a" stroke-width="2.6"/></svg>
<div class="snap" style="left:1689.5px;top:81px"></div>
<svg class="a" style="left:1690.5px;top:82px" width="22" height="22" viewBox="0 0 24 24"><circle cx="5" cy="12" r="2.2" fill="#15a07e" stroke="#0a4a3a" stroke-width=".8"/><circle cx="12" cy="12" r="2.2" fill="#15a07e" stroke="#0a4a3a" stroke-width=".8"/><circle cx="19" cy="12" r="2.2" fill="#15a07e" stroke="#0a4a3a" stroke-width=".8"/></svg>
<div class="snap" style="left:1715.5px;top:81px"></div>
<svg class="a" style="left:1716.5px;top:82px" width="22" height="22" viewBox="0 0 24 24"><path d="M3 12L15 20" stroke="#0a4a3a" stroke-width="3.4"/><path d="M3 12L15 20" stroke="#15a07e" stroke-width="2"/><circle cx="17" cy="8" r="2.6" fill="#15a07e" stroke="#0a4a3a" stroke-width=".8"/></svg>
<div class="snap on" style="left:1741.5px;top:81px"></div>
<svg class="a" style="left:1742.5px;top:82px" width="22" height="22" viewBox="0 0 24 24"><path d="M10.5 4h3v6.5H20v3h-6.5V20h-3v-6.5H4v-3h6.5z" fill="#15a07e" stroke="#0a4a3a" stroke-width="1"/></svg>
<div class="snap" style="left:1767.6px;top:81px"></div>
<svg class="a" style="left:1768.6px;top:82px" width="22" height="22" viewBox="0 0 24 24"><path d="M5 9v10h10" fill="none" stroke="#15a07e" stroke-width="1.6"/><path d="M9 6h8v8" fill="none" stroke="#15a07e" stroke-width="1.6"/><text x="12" y="6" font-size="5" fill="#0a4a3a" font-family="Liberation Sans">1,00</text><text x="2" y="17" font-size="5" fill="#0a4a3a" font-family="Liberation Sans">3</text></svg>
<div class="snap on" style="left:1793.7px;top:81px"></div>
<svg class="a" style="left:1794.7px;top:82px" width="22" height="22" viewBox="0 0 24 24"><rect x="4" y="4" width="16" height="16" fill="#15a07e" stroke="#0a4a3a" stroke-width="1.2"/><circle cx="9" cy="15" r="1.6" fill="none" stroke="#0a4a3a" stroke-width="1"/></svg>
<div class="t" style="left:2px;top:118px;letter-spacing:0.12px;">Combo View</div>
<svg class="a" style="left:323px;top:119px" width="30" height="13"><rect x="1.5" y="1.5" width="10" height="10" rx="2" fill="none" stroke="#6e6c67"/><rect x="3.5" y="6.5" width="4" height="3" fill="#fff" stroke="#6e6c67"/><path d="M5.5 5.5v-2h4v4h-2" fill="none" stroke="#6e6c67"/><rect x="18.5" y="1.5" width="10" height="10" rx="2" fill="none" stroke="#6e6c67"/><path d="M21 4l5 5M26 4l-5 5" stroke="#6e6c67" stroke-width="1.8"/></svg>
<div class="a" style="left:0px;top:167px;width:355px;height:864px;border:1px solid #b9b5af;border-radius:3px;background:#f4f4f3"></div>
<div class="a" style="left:1px;top:138px;width:58px;height:31px;border:1px solid #b9b5af;border-bottom:none;border-radius:4px 4px 0 0;background:linear-gradient(#fbfbfa,#f2f1f0)"></div>
<div class="a" style="left:58px;top:141px;width:52px;height:27px;border:1px solid #c2beb8;border-bottom:none;border-radius:4px 4px 0 0;background:linear-gradient(#efeeec,#dfdddb)"></div>
<div class="t" style="left:8px;top:145px;font-size:15px;letter-spacing:0.19px;">Model</div>
<div class="t" style="left:66px;top:146px;letter-spacing:-0.46px;">Tasks</div>
<div class="a" style="left:2px;top:168px;width:352px;height:393px;border:1px solid #b9b5af;background:#fff"></div>
<div class="a" style="left:3px;top:169px;width:349px;height:26px;background:#f2f1f0"></div>
<div class="a" style="left:3px;top:169px;width:147px;height:26px;border-right:1px solid #cfccc7;border-bottom:1px solid #bdbab5;background:linear-gradient(#fdfdfd,#efeeec)"></div>
<div class="t" style="left:7px;top:175px;letter-spacing:0.36px;">Labels &amp; Attributes</div>
<div class="t" style="left:6px;top:197px;letter-spacing:0.43px;">Application</div>
<svg class="a" style="left:10px;top:218px" width="10" height="10"><path d="M1.5 2h7l-3.5 5.5z" fill="#5a5a5a" stroke="#8a8a8a" stroke-width=".8"/></svg>
<svg class="a" style="left:27px;top:214px" width="14" height="16"><rect x=".5" y=".5" width="12" height="15" fill="#f0f0f0" stroke="#aaa"/><path d="M3 8l4-3 4 3v6H3z" fill="#2c4fc8"/><circle cx="8" cy="6" r="3" fill="#d42020"/></svg>
<div class="t" style="left:48px;top:216px;font-weight:bold;letter-spacing:-0.21px;color:#2e2e2e">Unnamed1</div>
<div class="a" style="left:3px;top:309px;width:146px;height:19px;border-top:1px solid #d2d0cc;background:linear-gradient(#e9e8e6,#d9d8d5)"></div>
<svg class="a" style="left:46px;top:234px" width="17" height="17"><rect x="1.5" y="7" width="9" height="8.5" fill="none" stroke="#3a36d8" stroke-width="1.1"/><circle cx="10.5" cy="6" r="4.8" fill="none" stroke="#3a36d8" stroke-width="1.1"/></svg>
<div class="t" style="left:68px;top:235px;letter-spacing:0.06px;color:#3c3b37">DWire</div>
<svg class="a" style="left:46px;top:253px" width="17" height="17"><rect x="1.5" y="7" width="9" height="8.5" fill="none" stroke="#3a36d8" stroke-width="1.1"/><circle cx="10.5" cy="6" r="4.8" fill="none" stroke="#3a36d8" stroke-width="1.1"/></svg>
<div class="t" style="left:68px;top:254px;letter-spacing:0.06px;color:#3c3b37">Rectangle</div>
<svg class="a" style="left:46px;top:272px" width="17" height="17"><rect x="1.5" y="7" width="9" height="8.5" fill="none" stroke="#a0a0a0" stroke-width="1.1"/><circle cx="10.5" cy="6" r="4.8" fill="none" stroke="#a0a0a0" stroke-width="1.1"/></svg>
<div class="t" style="left:68px;top:273px;letter-spacing:0.04px;color:#a0a0a0">DWire001</div>
<svg class="a" style="left:46px;top:291px" width="18" height="16"><defs><linearGradient id="tk" x1="0" y1="0" x2="0" y2="1"><stop offset="0" stop-color="#a8c8f4"/><stop offset="1" stop-color="#3a64c8"/></linearGradient></defs><path d="M5 15l11-1 1.5-1.5-1-1.5z" fill="#444" opacity=".8"/><path d="M1 9l3-3h10l-2 3v5H1z" fill="url(#tk)" stroke="#2a4aa0" stroke-width=".5"/><path d="M1 9l3-3h10l-2 3z" fill="#3a70e0"/></svg>
<svg class="a" style="left:30px;top:293px" width="10" height="12"><path d="M2 2v8l5.5-4z" fill="#5a5a5a" stroke="#888" stroke-width=".8"/></svg>
<div class="t" style="left:68px;top:292px;letter-spacing:-0.23px;color:#3c3b37">Thickness</div>
<svg class="a" style="left:46px;top:310px" width="17" height="17"><rect x="1.5" y="7" width="9" height="8.5" fill="none" stroke="#6a4ad8" stroke-width="1.1"/><circle cx="10.5" cy="6" r="4.8" fill="none" stroke="#6a4ad8" stroke-width="1.1"/></svg>
<div class="t" style="left:68px;top:311px;font-weight:bold;letter-spacing:0.25px;color:#222">DWire002</div>
<svg class="a" style="left:172px;top:562px" width="10" height="6"><path d="M2 1v4M5 1v4M8 1v4" stroke="#c9c6c1"/></svg>
<svg class="a" style="left:355px;top:568px" width="6" height="12"><path d="M1 2h4M1 5h4M1 8h4" stroke="#c9c6c1"/></svg>
<div class="a" style="left:2px;top:567px;width:352px;height:432px;border:1px solid #b9b5af;border-radius:3px;background:#f4f4f3"></div><div class="a" style="left:4px;top:569px;width:348px;height:428px;border:1px solid #c4c1bc;background:#fff"></div>
<div class="a" style="left:5px;top:570px;width:345px;height:25px;border-bottom:1px solid #c5c2bd;background:linear-gradient(#fdfdfd,#efeeec)"></div>
<div class="a" style="left:104px;top:570px;width:1px;height:24px;background:#d6d3ce"></div>
<div class="t" style="left:9px;top:575px;letter-spacing:0.54px;">Property</div>
<div class="t" style="left:108px;top:575px;letter-spacing:0.57px;">Value</div>
<div class="a" style="left:5px;top:594.5px;width:345px;height:20px;background:#c8c7c5"></div>
<div class="t" style="left:28px;top:597.5px;font-weight:bold;letter-spacing:-0.68px;color:#fbfbfb">2 D</div>
<div class="a" style="left:5px;top:614.5px;width:345px;height:20px;background:#c8c7c5"></div>
<div class="t" style="left:28px;top:617.5px;font-weight:bold;letter-spacing:-0.65px;color:#fbfbfb">Base</div>
<div class="a" style="left:5px;top:634.5px;width:345px;height:20px;background:#ffffff"></div>
<div class="a" style="left:25px;top:653.5px;width:325px;height:1px;background:#d2d0cc"></div>
<div class="a" style="left:104px;top:634.5px;width:1px;height:20px;background:#d2d0cc"></div>
<svg class="a" style="left:12px;top:639.5px" width="10" height="10"><path d="M2 1.5v7l5.5-3.5z" fill="#5a5a5a" stroke="#8a8a8a" stroke-width=".8"/></svg>
<div class="t" style="left:28px;top:637.5px;letter-spacing:0.12px;">Placement</div>
<div class="t" style="left:108px;top:637.5px;letter-spacing:-0.14px;">[(0,00 0,00 1,00); 0 °; (0 mm  0 mm…</div>
<div class="a" style="left:5px;top:654.5px;width:345px;height:20px;background:#eeeeed"></div>
<div class="a" style="left:25px;top:673.5px;width:325px;height:1px;background:#d2d0cc"></div>
<div class="a" style="left:104px;top:654.5px;width:1px;height:20px;background:#d2d0cc"></div>
<div class="t" style="left:28px;top:657.5px;letter-spacing:-0.07px;">Label</div>
<div class="t" style="left:108px;top:657.5px;letter-spacing:0.14px;">DWire002</div>
<div class="a" style="left:5px;top:674.5px;width:345px;height:20px;background:#c8c7c5"></div>
<div class="t" style="left:28px;top:677.5px;font-weight:bold;letter-spacing:1.06px;color:#fbfbfb">Draft</div>
<div class="a" style="left:5px;top:694.5px;width:345px;height:20px;background:#eeeeed"></div>
<div class="a" style="left:25px;top:713.5px;width:325px;height:1px;background:#d2d0cc"></div>
<div class="a" style="left:104px;top:694.5px;width:1px;height:20px;background:#d2d0cc"></div>
<div class="t" style="left:28px;top:697.5px;letter-spacing:-0.85px;">Base</div>
<div class="a" style="left:5px;top:714.5px;width:345px;height:20px;background:#ffffff"></div>
<div class="a" style="left:25px;top:733.5px;width:325px;height:1px;background:#d2d0cc"></div>
<div class="a" style="left:104px;top:714.5px;width:1px;height:20px;background:#d2d0cc"></div>
<div class="t" style="left:28px;top:717.5px;letter-spacing:-0.10px;">Chamfer…</div>
<div class="t" style="left:108px;top:717.5px;letter-spacing:-0.05px;">0 mm</div>
<div class="a" style="left:5px;top:734.5px;width:345px;height:20px;background:#eeeeed"></div>
<div class="a" style="left:25px;top:753.5px;width:325px;height:1px;background:#d2d0cc"></div>
<div class="a" style="left:104px;top:734.5px;width:1px;height:20px;background:#d2d0cc"></div>
<div class="t" style="left:28px;top:737.5px;letter-spacing:-0.31px;">Closed</div>
<div class="t" style="left:108px;top:737.5px;letter-spacing:0.11px;">false</div>
<div class="a" style="left:5px;top:754.5px;width:345px;height:20px;background:#ffffff"></div>
<div class="a" style="left:25px;top:773.5px;width:325px;height:1px;background:#d2d0cc"></div>
<div class="a" style="left:104px;top:754.5px;width:1px;height:20px;background:#d2d0cc"></div>
<svg class="a" style="left:12px;top:759.5px" width="10" height="10"><path d="M2 1.5v7l5.5-3.5z" fill="#5a5a5a" stroke="#8a8a8a" stroke-width=".8"/></svg>
<div class="t" style="left:28px;top:757.5px;letter-spacing:-0.75px;">End</div>
<div class="t" style="left:108px;top:757.5px;letter-spacing:0.04px;">[24,48 -11,00 14,40]</div>
<div class="a" style="left:5px;top:774.5px;width:345px;height:20px;background:#eeeeed"></div>
<div class="a" style="left:25px;top:793.5px;width:325px;height:1px;background:#d2d0cc"></div>
<div class="a" style="left:104px;top:774.5px;width:1px;height:20px;background:#d2d0cc"></div>
<div class="t" style="left:28px;top:777.5px;letter-spacing:-0.04px;">Fillet Ra…</div>
<div class="t" style="left:108px;top:777.5px;letter-spacing:-0.05px;">0 mm</div>
<div class="a" style="left:5px;top:794.5px;width:345px;height:20px;background:#ffffff"></div>
<div class="a" style="left:25px;top:813.5px;width:325px;height:1px;background:#d2d0cc"></div>
<div class="a" style="left:104px;top:794.5px;width:1px;height:20px;background:#d2d0cc"></div>
<div class="t" style="left:28px;top:797.5px;letter-spacing:0.23px;">Length</div>
<div class="t" style="left:108px;top:797.5px;letter-spacing:0.04px;">63,4094 mm</div>
<div class="a" style="left:5px;top:814.5px;width:345px;height:20px;background:#eeeeed"></div>
<div class="a" style="left:25px;top:833.5px;width:325px;height:1px;background:#d2d0cc"></div>
<div class="a" style="left:104px;top:814.5px;width:1px;height:20px;background:#d2d0cc"></div>
<div class="t" style="left:28px;top:817.5px;letter-spacing:-0.47px;">Make Face</div>
<div class="a" style="left:106px;top:815.5px;width:243px;height:18px;border:1px solid #b9b5af;border-radius:4px;background:linear-gradient(#fdfdfd,#efeeec)"></div>
<svg class="a" style="left:334px;top:816.5px" width="10" height="16"><path d="M2 6l3-3 3 3zM2 10l3 3 3-3z" fill="#6a6a6a"/></svg>
<div class="t" style="left:110px;top:816.5px;letter-spacing:0.80px;">true</div>
<div class="a" style="left:5px;top:834.5px;width:345px;height:20px;background:#ffffff"></div>
<div class="a" style="left:25px;top:853.5px;width:325px;height:1px;background:#d2d0cc"></div>
<div class="a" style="left:104px;top:834.5px;width:1px;height:20px;background:#d2d0cc"></div>
<svg class="a" style="left:12px;top:839.5px" width="10" height="10"><path d="M2 1.5v7l5.5-3.5z" fill="#5a5a5a" stroke="#8a8a8a" stroke-width=".8"/></svg>
<div class="t" style="left:28px;top:837.5px;letter-spacing:0.38px;">Start</div>
<div class="t" style="left:108px;top:837.5px;letter-spacing:0.01px;">[17,00 1,00 0,00]</div>
<div class="a" style="left:5px;top:854.5px;width:345px;height:20px;background:#eeeeed"></div>
<div class="a" style="left:25px;top:873.5px;width:325px;height:1px;background:#d2d0cc"></div>
<div class="a" style="left:104px;top:854.5px;width:1px;height:20px;background:#d2d0cc"></div>
<div class="t" style="left:28px;top:857.5px;letter-spacing:0.47px;">Tool</div>
<svg class="a" style="left:0;top:996px" width="120" height="36"><path d="M2.5 5L13 29q2 3 5 3h18q3 0 4.5-3L51 5" fill="#f0efed" stroke="#3c3b37" stroke-width="1.1"/><path d="M51.5 3L63 30q1.5 3 5 3h17q3 0 4.5-3L99 3" fill="#fff" stroke="#3c3b37" stroke-width="1.1"/></svg>
<div class="t" style="left:10px;top:1005px;letter-spacing:0.28px;">View</div>
<div class="t" style="left:59px;top:1006px;letter-spacing:-0.15px;">Data</div>
<div class="a" style="left:360px;top:112px;width:1495px;height:887px;background:#fdfdfc"></div>
<svg class="a" style="left:361px;top:113px" width="1494" height="885" viewBox="361 113 1494 885"><defs><linearGradient id="bg" x1="0" y1="0" x2="0" y2="1"><stop offset="0" stop-color="#333366"/><stop offset="1" stop-color="#9797aa"/></linearGradient><clipPath id="vc"><rect x="361" y="113" width="1494" height="885"/></clipPath></defs><rect x="361" y="113" width="1494" height="885" fill="url(#bg)"/><path d="M361 113.5H1855" stroke="#000030" stroke-opacity=".45" stroke-width="1"/><path d="M361.5 114V998" stroke="#000030" stroke-opacity=".12" stroke-width="1"/><path d="M1070.5 430.1L1095.7 407.5L1296.8 377.8L1371.5 387L1504.6 476.5L1479.6 499.3L1279 529L1205.2 519.6Z" fill="#4a4a4a" stroke="#000" stroke-width="2" stroke-linejoin="round"/><g clip-path="url(#vc)"><path d="M848.0 868.1L278.5 488.8M830.6 866.0L1998.1 694.4M859.6 866.4L290.1 487.1M824.9 862.2L1992.4 690.6M871.3 864.7L301.8 485.4M819.2 858.4L1986.7 686.8M883.0 862.9L313.5 483.6M813.5 854.6L1981.0 683.0M894.7 861.2L325.2 481.9M807.8 850.8L1975.3 679.2M906.3 859.5L336.8 480.2M802.1 847.0L1969.6 675.4M918.0 857.8L348.5 478.5M796.4 843.2L1963.9 671.6M929.7 856.1L360.2 476.8M790.7 839.5L1958.2 667.9M941.4 854.4L371.9 475.1M785.0 835.7L1952.5 664.1M964.7 850.9L395.2 471.6M773.7 828.1L1941.2 656.5M976.4 849.2L406.9 469.9M768.0 824.3L1935.5 652.7M988.1 847.5L418.6 468.2M762.3 820.5L1929.8 648.9M999.8 845.8L430.2 466.5M756.6 816.7L1924.1 645.1M1011.4 844.1L441.9 464.8M750.9 812.9L1918.4 641.3M1023.1 842.3L453.6 463.0M745.2 809.1L1912.7 637.5M1034.8 840.6L465.3 461.3M739.5 805.3L1907.0 633.7M1046.5 838.9L477.0 459.6M733.8 801.5L1901.3 629.9M1058.1 837.2L488.6 457.9M728.1 797.7L1895.6 626.1M1081.5 833.8L512.0 454.5M716.7 790.1L1884.2 618.5M1093.2 832.0L523.7 452.7M711.0 786.4L1878.5 614.8M1104.8 830.3L535.3 451.0M705.3 782.6L1872.8 611.0M1116.5 828.6L547.0 449.3M699.6 778.8L1867.1 607.2M1128.2 826.9L558.7 447.6M693.9 775.0L1861.4 603.4M1139.8 825.2L570.3 445.9M688.2 771.2L1855.7 599.6M1151.5 823.5L582.0 444.2M682.5 767.4L1850.0 595.8M1163.2 821.8L593.7 442.5M676.8 763.6L1844.3 592.0M1174.9 820.0L605.4 440.7M671.1 759.8L1838.6 588.2M1198.2 816.6L628.7 437.3M659.8 752.2L1827.3 580.6M1209.9 814.9L640.4 435.6M654.1 748.4L1821.6 576.8M1221.6 813.2L652.1 433.9M648.4 744.6L1815.9 573.0M1233.2 811.5L663.8 432.2M642.7 740.8L1810.2 569.2M1244.9 809.7L675.4 430.4M637.0 737.0L1804.5 565.4M1256.6 808.0L687.1 428.7M631.3 733.3L1798.8 561.7M1268.3 806.3L698.8 427.0M625.6 729.5L1793.1 557.9M1279.9 804.6L710.4 425.3M619.9 725.7L1787.4 554.1M1291.6 802.9L722.1 423.6M614.2 721.9L1781.7 550.3M1315.0 799.4L745.5 420.1M602.8 714.3L1770.3 542.7M1326.7 797.7L757.2 418.4M597.1 710.5L1764.6 538.9M1338.3 796.0L768.8 416.7M591.4 706.7L1758.9 535.1M1350.0 794.3L780.5 415.0M585.7 702.9L1753.2 531.3M1361.7 792.6L792.2 413.3M580.0 699.1L1747.5 527.5M1373.3 790.9L803.8 411.6M574.3 695.3L1741.8 523.7M1385.0 789.1L815.5 409.8M568.6 691.5L1736.1 519.9M1396.7 787.4L827.2 408.1M562.9 687.7L1730.4 516.1M1408.4 785.7L838.9 406.4M557.2 683.9L1724.7 512.3M1431.7 782.3L862.2 403.0M545.9 676.4L1713.4 504.8M1443.4 780.6L873.9 401.3M540.2 672.6L1707.7 501.0M1455.1 778.9L885.6 399.6M534.5 668.8L1702.0 497.2M1466.8 777.1L897.2 397.8M528.8 665.0L1696.3 493.4M1478.4 775.4L908.9 396.1M523.1 661.2L1690.6 489.6M1490.1 773.7L920.6 394.4M517.4 657.4L1684.9 485.8M1501.8 772.0L932.3 392.7M511.7 653.6L1679.2 482.0M1513.4 770.3L943.9 391.0M506.0 649.8L1673.5 478.2M1525.1 768.6L955.6 389.3M500.3 646.0L1667.8 474.4M1548.5 765.1L979.0 385.8M488.9 638.4L1656.4 466.8M1560.2 763.4L990.7 384.1M483.2 634.6L1650.7 463.0M1571.8 761.7L1002.3 382.4M477.5 630.8L1645.0 459.2M1583.5 760.0L1014.0 380.7M471.8 627.0L1639.3 455.4M1595.2 758.3L1025.7 379.0M466.1 623.3L1633.6 451.7M1606.8 756.5L1037.3 377.2M460.4 619.5L1627.9 447.9M1618.5 754.8L1049.0 375.5M454.7 615.7L1622.2 444.1M1630.2 753.1L1060.7 373.8M449.0 611.9L1616.5 440.3M1641.9 751.4L1072.4 372.1M443.3 608.1L1610.8 436.5M1665.2 748.0L1095.7 368.7M432.0 600.5L1599.5 428.9M1676.9 746.2L1107.4 366.9M426.3 596.7L1593.8 425.1M1688.6 744.5L1119.1 365.2M420.6 592.9L1588.1 421.3M1700.2 742.8L1130.8 363.5M414.9 589.1L1582.4 417.5M1711.9 741.1L1142.4 361.8M409.2 585.3L1576.7 413.7M1723.6 739.4L1154.1 360.1M403.5 581.5L1571.0 409.9M1735.3 737.7L1165.8 358.4M397.8 577.7L1565.3 406.1M1746.9 736.0L1177.4 356.7M392.1 573.9L1559.6 402.3M1758.6 734.2L1189.1 354.9M386.4 570.2L1553.9 398.6M1782.0 730.8L1212.5 351.5M375.0 562.6L1542.5 391.0M1793.6 729.1L1224.1 349.8M369.3 558.8L1536.8 387.2M1805.3 727.4L1235.8 348.1M363.6 555.0L1531.1 383.4M1817.0 725.7L1247.5 346.4M357.9 551.2L1525.4 379.6M1828.7 723.9L1259.2 344.6M352.2 547.4L1519.7 375.8M1840.3 722.2L1270.8 342.9M346.5 543.6L1514.0 372.0M1852.0 720.5L1282.5 341.2M340.8 539.8L1508.3 368.2M1863.7 718.8L1294.2 339.5M335.1 536.0L1502.6 364.4M1875.4 717.1L1305.9 337.8M329.4 532.2L1496.9 360.6M1898.7 713.6L1329.2 334.3M318.1 524.6L1485.6 353.0M1910.4 711.9L1340.9 332.6M312.4 520.8L1479.9 349.2M1922.1 710.2L1352.6 330.9M306.7 517.1L1474.2 345.5M1933.8 708.5L1364.2 329.2M301.0 513.3L1468.5 341.7M1945.4 706.8L1375.9 327.5M295.3 509.5L1462.8 337.9M1957.1 705.1L1387.6 325.8M289.6 505.7L1457.1 334.1M1968.8 703.3L1399.3 324.0M283.9 501.9L1451.4 330.3M1980.5 701.6L1411.0 322.3M278.2 498.1L1445.7 326.5M1992.1 699.9L1422.6 320.6M272.5 494.3L1440.0 322.7" stroke="#282840" stroke-opacity=".24" stroke-width="1" fill="none"/><path d="M836.3 869.8L266.8 490.5M836.3 869.8L2003.8 698.2M953.0 852.6L383.5 473.3M779.3 831.9L1946.8 660.3M1069.8 835.5L500.3 456.2M722.4 793.9L1889.9 622.3M1186.5 818.3L617.0 439.0M665.4 756.0L1832.9 584.4M1303.3 801.2L733.8 421.9M608.5 718.1L1776.0 546.5M1420.0 784.0L850.5 404.7M551.5 680.1L1719.0 508.5M1536.8 766.8L967.3 387.5M494.6 642.2L1662.1 470.6M1653.5 749.7L1084.0 370.4M437.6 604.3L1605.1 432.7M1770.3 732.5L1200.8 353.2M380.7 566.4L1548.2 394.8M1887.0 715.4L1317.5 336.1M323.7 528.4L1491.2 356.8M2003.8 698.2L1434.3 318.9M266.8 490.5L1434.3 318.9" stroke="#101030" stroke-opacity=".45" stroke-width="1" fill="none"/></g><path d="M560.4 591.5L439.1 511.1L455.9 495.6L657.7 465.7L707.8 471.3L806.1 537.2L855.7 543.0L914.1 534.2L965.3 533.8L1056.5 544.6" fill="none" stroke="#000" stroke-width="2" stroke-linejoin="round"/><path d="M1328.1 561.5L1330.4 281.7L1494.4 259.3L1562.4 304.2L1561.4 405.9L1484.7 416.8" fill="none" stroke="#000" stroke-width="2" stroke-linejoin="round"/><defs><mask id="tm" maskUnits="userSpaceOnUse" x="361" y="113" width="1494" height="885"><path d="M738.3 707.5L662.4 658.7C646.7 648.6 668.7 630.5 702.3 625.7L769.3 616.1C783.3 614.1 808.7 614.2 826 616.2L954.3 631.3C971.9 633.4 1000.4 633 1018 630.5L1130.2 614.5" stroke="#fff" stroke-width="25" fill="none"/></mask><mask id="lm" maskUnits="userSpaceOnUse" x="361" y="113" width="1494" height="885"><path d="M769.3 616.1C783.3 614.1 808.7 614.2 826 616.2L954.3 631.3C971.9 633.4 1000.4 633 1018 630.5L1130.2 614.5" transform="translate(0,8)" stroke="#fff" stroke-width="9" fill="none"/></mask><filter id="tb" filterUnits="userSpaceOnUse" x="361" y="113" width="1494" height="885"><feGaussianBlur stdDeviation="2"/></filter><filter id="tb1" filterUnits="userSpaceOnUse" x="361" y="113" width="1494" height="885"><feGaussianBlur stdDeviation="1.2"/></filter><linearGradient id="bend" gradientUnits="userSpaceOnUse" x1="640" y1="660" x2="700" y2="615"><stop offset=".45" stop-color="#5a5a5a"/><stop offset="1" stop-color="#6a6a6a" stop-opacity="0"/></linearGradient></defs><path d="M738.3 707.5L662.4 658.7C646.7 648.6 668.7 630.5 702.3 625.7L769.3 616.1C783.3 614.1 808.7 614.2 826 616.2L954.3 631.3C971.9 633.4 1000.4 633 1018 630.5L1130.2 614.5" stroke="#3a3a3a" stroke-width="26.5" fill="none"/><g mask="url(#tm)"><path d="M738.3 707.5L662.4 658.7C646.7 648.6 668.7 630.5 702.3 625.7L769.3 616.1C783.3 614.1 808.7 614.2 826 616.2L954.3 631.3C971.9 633.4 1000.4 633 1018 630.5L1130.2 614.5" stroke="#a4a4a4" stroke-width="27" fill="none"/><g filter="url(#tb)"><path d="M662.4 658.7C646.7 648.6 668.7 630.5 702.3 625.7L769.3 616.1C783.3 614.1 808.7 614.2 826 616.2L954.3 631.3C971.9 633.4 1000.4 633 1018 630.5L1130.2 614.5" transform="translate(0,1)" stroke="#d2d2d2" stroke-width="17" fill="none"/><path d="M662.4 658.7C646.7 648.6 668.7 630.5 702.3 625.7L769.3 616.1C783.3 614.1 808.7 614.2 826 616.2L954.3 631.3C971.9 633.4 1000.4 633 1018 630.5L1130.2 614.5" transform="translate(0,-1)" stroke="#e6e6e6" stroke-width="9" fill="none"/></g><g filter="url(#tb1)"><path d="M662.4 658.7C646.7 648.6 668.7 630.5 702.3 625.7L769.3 616.1C783.3 614.1 808.7 614.2 826 616.2L954.3 631.3C971.9 633.4 1000.4 633 1018 630.5L1130.2 614.5" transform="translate(0,-12)" stroke="#505050" stroke-width="5" fill="none"/><path d="M662.4 658.7C646.7 648.6 668.7 630.5 702.3 625.7L769.3 616.1C783.3 614.1 808.7 614.2 826 616.2L954.3 631.3C971.9 633.4 1000.4 633 1018 630.5L1130.2 614.5" transform="translate(0,12.5)" stroke="#7a7a7a" stroke-width="3" fill="none"/></g><g filter="url(#tb)"><path d="M738.3 707.5L662.4 658.7C646.7 648.6 668.7 630.5 702.3 625.7" stroke="url(#bend)" stroke-width="30" fill="none"/><path d="M741.3 710.5L665.4 661.7" stroke="#565656" stroke-width="30" fill="none"/><path d="M740.3 704.5L664.4 655.7" stroke="#707070" stroke-width="9" fill="none"/></g><g mask="url(#lm)" opacity=".7"><g clip-path="url(#vc)"><path d="M848.0 868.1L278.5 488.8M830.6 866.0L1998.1 694.4M859.6 866.4L290.1 487.1M824.9 862.2L1992.4 690.6M871.3 864.7L301.8 485.4M819.2 858.4L1986.7 686.8M883.0 862.9L313.5 483.6M813.5 854.6L1981.0 683.0M894.7 861.2L325.2 481.9M807.8 850.8L1975.3 679.2M906.3 859.5L336.8 480.2M802.1 847.0L1969.6 675.4M918.0 857.8L348.5 478.5M796.4 843.2L1963.9 671.6M929.7 856.1L360.2 476.8M790.7 839.5L1958.2 667.9M941.4 854.4L371.9 475.1M785.0 835.7L1952.5 664.1M964.7 850.9L395.2 471.6M773.7 828.1L1941.2 656.5M976.4 849.2L406.9 469.9M768.0 824.3L1935.5 652.7M988.1 847.5L418.6 468.2M762.3 820.5L1929.8 648.9M999.8 845.8L430.2 466.5M756.6 816.7L1924.1 645.1M1011.4 844.1L441.9 464.8M750.9 812.9L1918.4 641.3M1023.1 842.3L453.6 463.0M745.2 809.1L1912.7 637.5M1034.8 840.6L465.3 461.3M739.5 805.3L1907.0 633.7M1046.5 838.9L477.0 459.6M733.8 801.5L1901.3 629.9M1058.1 837.2L488.6 457.9M728.1 797.7L1895.6 626.1M1081.5 833.8L512.0 454.5M716.7 790.1L1884.2 618.5M1093.2 832.0L523.7 452.7M711.0 786.4L1878.5 614.8M1104.8 830.3L535.3 451.0M705.3 782.6L1872.8 611.0M1116.5 828.6L547.0 449.3M699.6 778.8L1867.1 607.2M1128.2 826.9L558.7 447.6M693.9 775.0L1861.4 603.4M1139.8 825.2L570.3 445.9M688.2 771.2L1855.7 599.6M1151.5 823.5L582.0 444.2M682.5 767.4L1850.0 595.8M1163.2 821.8L593.7 442.5M676.8 763.6L1844.3 592.0M1174.9 820.0L605.4 440.7M671.1 759.8L1838.6 588.2M1198.2 816.6L628.7 437.3M659.8 752.2L1827.3 580.6M1209.9 814.9L640.4 435.6M654.1 748.4L1821.6 576.8M1221.6 813.2L652.1 433.9M648.4 744.6L1815.9 573.0M1233.2 811.5L663.8 432.2M642.7 740.8L1810.2 569.2M1244.9 809.7L675.4 430.4M637.0 737.0L1804.5 565.4M1256.6 808.0L687.1 428.7M631.3 733.3L1798.8 561.7M1268.3 806.3L698.8 427.0M625.6 729.5L1793.1 557.9M1279.9 804.6L710.4 425.3M619.9 725.7L1787.4 554.1M1291.6 802.9L722.1 423.6M614.2 721.9L1781.7 550.3M1315.0 799.4L745.5 420.1M602.8 714.3L1770.3 542.7M1326.7 797.7L757.2 418.4M597.1 710.5L1764.6 538.9M1338.3 796.0L768.8 416.7M591.4 706.7L1758.9 535.1M1350.0 794.3L780.5 415.0M585.7 702.9L1753.2 531.3M1361.7 792.6L792.2 413.3M580.0 699.1L1747.5 527.5M1373.3 790.9L803.8 411.6M574.3 695.3L1741.8 523.7M1385.0 789.1L815.5 409.8M568.6 691.5L1736.1 519.9M1396.7 787.4L827.2 408.1M562.9 687.7L1730.4 516.1M1408.4 785.7L838.9 406.4M557.2 683.9L1724.7 512.3M1431.7 782.3L862.2 403.0M545.9 676.4L1713.4 504.8M1443.4 780.6L873.9 401.3M540.2 672.6L1707.7 501.0M1455.1 778.9L885.6 399.6M534.5 668.8L1702.0 497.2M1466.8 777.1L897.2 397.8M528.8 665.0L1696.3 493.4M1478.4 775.4L908.9 396.1M523.1 661.2L1690.6 489.6M1490.1 773.7L920.6 394.4M517.4 657.4L1684.9 485.8M1501.8 772.0L932.3 392.7M511.7 653.6L1679.2 482.0M1513.4 770.3L943.9 391.0M506.0 649.8L1673.5 478.2M1525.1 768.6L955.6 389.3M500.3 646.0L1667.8 474.4M1548.5 765.1L979.0 385.8M488.9 638.4L1656.4 466.8M1560.2 763.4L990.7 384.1M483.2 634.6L1650.7 463.0M1571.8 761.7L1002.3 382.4M477.5 630.8L1645.0 459.2M1583.5 760.0L1014.0 380.7M471.8 627.0L1639.3 455.4M1595.2 758.3L1025.7 379.0M466.1 623.3L1633.6 451.7M1606.8 756.5L1037.3 377.2M460.4 619.5L1627.9 447.9M1618.5 754.8L1049.0 375.5M454.7 615.7L1622.2 444.1M1630.2 753.1L1060.7 373.8M449.0 611.9L1616.5 440.3M1641.9 751.4L1072.4 372.1M443.3 608.1L1610.8 436.5M1665.2 748.0L1095.7 368.7M432.0 600.5L1599.5 428.9M1676.9 746.2L1107.4 366.9M426.3 596.7L1593.8 425.1M1688.6 744.5L1119.1 365.2M420.6 592.9L1588.1 421.3M1700.2 742.8L1130.8 363.5M414.9 589.1L1582.4 417.5M1711.9 741.1L1142.4 361.8M409.2 585.3L1576.7 413.7M1723.6 739.4L1154.1 360.1M403.5 581.5L1571.0 409.9M1735.3 737.7L1165.8 358.4M397.8 577.7L1565.3 406.1M1746.9 736.0L1177.4 356.7M392.1 573.9L1559.6 402.3M1758.6 734.2L1189.1 354.9M386.4 570.2L1553.9 398.6M1782.0 730.8L1212.5 351.5M375.0 562.6L1542.5 391.0M1793.6 729.1L1224.1 349.8M369.3 558.8L1536.8 387.2M1805.3 727.4L1235.8 348.1M363.6 555.0L1531.1 383.4M1817.0 725.7L1247.5 346.4M357.9 551.2L1525.4 379.6M1828.7 723.9L1259.2 344.6M352.2 547.4L1519.7 375.8M1840.3 722.2L1270.8 342.9M346.5 543.6L1514.0 372.0M1852.0 720.5L1282.5 341.2M340.8 539.8L1508.3 368.2M1863.7 718.8L1294.2 339.5M335.1 536.0L1502.6 364.4M1875.4 717.1L1305.9 337.8M329.4 532.2L1496.9 360.6M1898.7 713.6L1329.2 334.3M318.1 524.6L1485.6 353.0M1910.4 711.9L1340.9 332.6M312.4 520.8L1479.9 349.2M1922.1 710.2L1352.6 330.9M306.7 517.1L1474.2 345.5M1933.8 708.5L1364.2 329.2M301.0 513.3L1468.5 341.7M1945.4 706.8L1375.9 327.5M295.3 509.5L1462.8 337.9M1957.1 705.1L1387.6 325.8M289.6 505.7L1457.1 334.1M1968.8 703.3L1399.3 324.0M283.9 501.9L1451.4 330.3M1980.5 701.6L1411.0 322.3M278.2 498.1L1445.7 326.5M1992.1 699.9L1422.6 320.6M272.5 494.3L1440.0 322.7" stroke="#282840" stroke-opacity=".24" stroke-width="1" fill="none"/><path d="M836.3 869.8L266.8 490.5M836.3 869.8L2003.8 698.2M953.0 852.6L383.5 473.3M779.3 831.9L1946.8 660.3M1069.8 835.5L500.3 456.2M722.4 793.9L1889.9 622.3M1186.5 818.3L617.0 439.0M665.4 756.0L1832.9 584.4M1303.3 801.2L733.8 421.9M608.5 718.1L1776.0 546.5M1420.0 784.0L850.5 404.7M551.5 680.1L1719.0 508.5M1536.8 766.8L967.3 387.5M494.6 642.2L1662.1 470.6M1653.5 749.7L1084.0 370.4M437.6 604.3L1605.1 432.7M1770.3 732.5L1200.8 353.2M380.7 566.4L1548.2 394.8M1887.0 715.4L1317.5 336.1M323.7 528.4L1491.2 356.8M2003.8 698.2L1434.3 318.9M266.8 490.5L1434.3 318.9" stroke="#101030" stroke-opacity=".45" stroke-width="1" fill="none"/></g></g></g><path d="M671 646.8C680 636 690 631 706.6 629.6L772.6 620.4C786 618 810 619 826 619.5L954 634.5C972 636.5 1000 636.5 1020 634L1133 617.7" stroke="#0a0a0a" stroke-width="1.6" fill="none"/><path d="M669.5 648.6A12.5 12.5 0 0 0 656.5 668.8" stroke="#111" stroke-width="1.4" fill="none"/><path d="M698.7 613.1Q710.3 625.6500000000001 705.9 638.2" stroke="#111" stroke-width="1.4" fill="none"/><path d="M766 603.2Q777.3 616.1 772.6 629" stroke="#111" stroke-width="1.4" fill="none"/><path d="M827.4 603.6Q818.95 616.1500000000001 824.5 628.7" stroke="#111" stroke-width="1.4" fill="none"/><path d="M954.7 618.7Q948.25 631.25 953.8 643.8" stroke="#111" stroke-width="1.4" fill="none"/><path d="M1014.2 618.7Q1024.95 630.5 1021.7 642.3" stroke="#111" stroke-width="1.4" fill="none"/><path d="M1127.4 601.7Q1138 613 1133 627.2" stroke="#111" stroke-width="1.5" fill="none"/><ellipse cx="738.2" cy="707.6" rx="11.8" ry="12.1" fill="#cdcdcd" stroke="#151515" stroke-width="1.6"/><defs><linearGradient id="ih" x1="0" y1="0" x2="0" y2="1"><stop offset="0" stop-color="#3a3a3a"/><stop offset=".35" stop-color="#6a6a6a"/><stop offset="1" stop-color="#9a9a9a"/></linearGradient></defs><ellipse cx="738" cy="707.4" rx="7.5" ry="7.7" fill="url(#ih)" stroke="#151515" stroke-width="1.5"/><path d="M733 701.5Q738 702 743 706" stroke="#222" stroke-width="1.2" fill="none"/><path d="M731.5 705.5l11 7" stroke="#303050" stroke-width=".9" opacity=".6"/><path d="M1811.5 953.8L1811.5 927" stroke="#2020a0" stroke-width="1.8"/><path d="M1809.0 932L1811.5 922.5L1814.0 932z" fill="#2020a0"/><path d="M1811.5 953.8L1830 950.5" stroke="#a02020" stroke-width="1.8"/><path d="M1828 947.5L1836 949.5L1828.5 953z" fill="#a02020"/><path d="M1811.5 953.8L1803 948.5" stroke="#209020" stroke-width="1.8"/><path d="M1800 946L1804 945.5L1802 950z" fill="#209020"/><text x="1813.5" y="925" font-family="Liberation Sans" font-size="10" fill="#000">Z</text><text x="1837.5" y="951" font-family="Liberation Sans" font-size="10" fill="#000">X</text><text x="1802.5" y="946" font-family="Liberation Sans" font-size="10" fill="#000">Y</text></svg>
<div class="a" style="left:361px;top:998px;width:164px;height:33px;border:1px solid #b9b5af;border-top:none;border-radius:0 0 4px 4px;background:linear-gradient(#f2f1f0,#f9f9f8)"></div>
<svg class="a" style="left:367px;top:1006px" width="18" height="16"><path d="M1 1h7v2H3v4h4v2H3v5H1z" fill="#e83a10"/><rect x="1" y="1" width="3" height="13" fill="#e83a10"/><g transform="translate(11 9)"><circle r="4" fill="none" stroke="#1a3aa8" stroke-width="2.6" stroke-dasharray="1.6 1.2"/><circle r="3" fill="#1a3aa8"/><circle r="1.3" fill="#fff"/></g></svg>
<div class="t" style="left:392px;top:1008px;letter-spacing:0.02px;">Unnamed1 : 1*</div>
<svg class="a" style="left:500px;top:1008px" width="14" height="14"><path d="M2.5 2.5l9 9M11.5 2.5l-9 9" stroke="#595959" stroke-width="3"/></svg>
<div class="a" style="left:361px;top:1030px;width:1494px;height:1px;background:#cdcac5"></div>
<div class="a" style="left:0;top:1031px;width:1855px;height:1px;background:#fdfdfc"></div>
<div class="t" style="left:1706px;top:1040px;letter-spacing:-0.00px;">114.99 x 68.12 mm</div>
<svg class="a" style="left:1843px;top:1048px" width="12" height="12"><path d="M10 2v1M7 5v1M10 5v1M4 8v1M7 8v1M10 8v1" stroke="#cfcbc5" stroke-width="1.5"/></svg>
</body></html>
